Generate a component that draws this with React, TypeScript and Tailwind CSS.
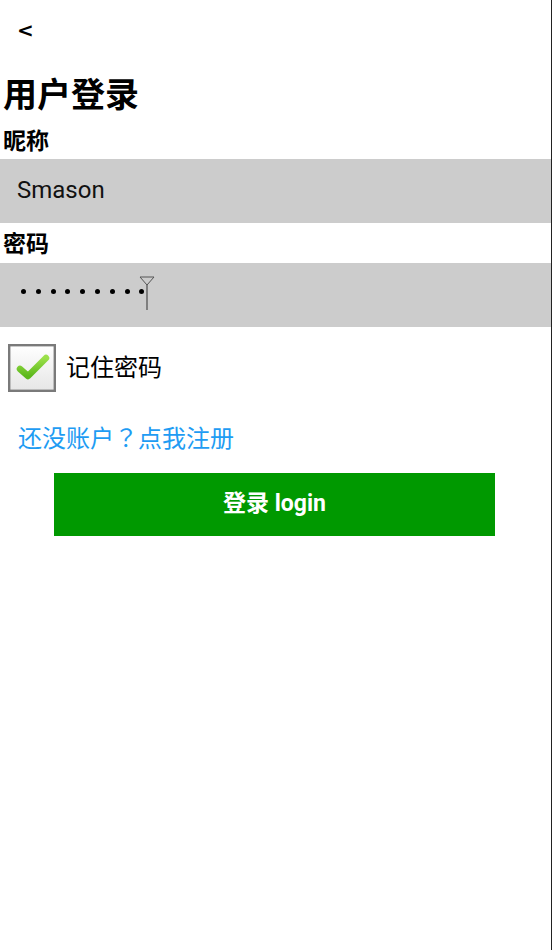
import React from "react";

const cjk = { fontFamily: 'Roboto, "Noto Sans CJK SC", sans-serif' };

function CheckBox() {
  return (
    <svg width="48" height="48" viewBox="0 0 48 48">
      <defs>
        <linearGradient id="bg" x1="0" y1="0" x2="0" y2="1">
          <stop offset="0" stopColor="#ffffff" />
          <stop offset="1" stopColor="#e6e6e6" />
        </linearGradient>
        <linearGradient id="gk" x1="0" y1="0" x2="0" y2="1">
          <stop offset="0" stopColor="#9be04a" />
          <stop offset="1" stopColor="#5cb81c" />
        </linearGradient>
      </defs>
      <rect x="1.2" y="1.2" width="45.6" height="45.6" fill="url(#bg)" stroke="#7a7a7a" strokeWidth="2.4" />
      <path d="M12 25 L20 32 L38 14" fill="none" stroke="url(#gk)" strokeWidth="6.5" strokeLinecap="round" strokeLinejoin="round" />
    </svg>
  );
}

export default function App() {
  return (
    <div className="w-[552px] h-[950px] bg-white border-r border-[#222] box-border" style={cjk}>
      <div className="h-[60px] flex items-center pl-[17px]">
        <span className="text-[20px] font-black text-black leading-none" style={{ fontFamily: '"DejaVu Sans", sans-serif' }}>&lt;</span>
      </div>
      <div className="h-[58px] pl-[3px] pt-[18px] text-[34px] leading-[34px] font-bold text-black">用户登录</div>
      <div className="pl-[3px] pt-[12px] pb-[6px] text-[23px] leading-[23px] font-bold text-black">昵称</div>
      <div className="h-[64px] bg-[#cccccc] flex items-center pl-[17px] pb-[3px] text-[24px] text-[#111]">Smason</div>
      <div className="pl-[3px] pt-[10px] pb-[7px] text-[23px] leading-[23px] font-bold text-black">密码</div>
      <div className="h-[64px] bg-[#cccccc] flex items-center pl-[21px]">
        <div className="flex items-center gap-[9.8px] mt-[-8px]">
          {Array.from({ length: 9 }).map((_, i) => (
            <div key={i} className="w-[5px] h-[5px] rounded-full bg-black" />
          ))}
        </div>
        <svg width="16" height="36" viewBox="0 0 16 36" className="ml-[-5px] mt-[-3px]">
          <path d="M1 1 L15 1 L8 9 Z" fill="none" stroke="#555" strokeWidth="1" />
          <line x1="8" y1="9" x2="8" y2="34" stroke="#555" strokeWidth="1.3" />
        </svg>
      </div>
      <div className="flex items-center pt-[17px] pl-[8px]">
        <CheckBox />
        <span className="ml-[10px] text-[24px] text-black">记住密码</span>
      </div>
      <div className="pl-[18px] pt-[33px] h-[57px] text-[24px] leading-[24px] text-[#1e9cf3]">
        还没账户<span style={{ fontFamily: '"Noto Sans CJK TC", sans-serif' }}>？</span>点我注册
      </div>
      <div className="pl-[54px] pt-[24px]">
        <div className="w-[441px] h-[63px] bg-[#009900] flex items-center justify-center text-white text-[23px] font-bold">
          登录 login
        </div>
      </div>
    </div>
  );
}
